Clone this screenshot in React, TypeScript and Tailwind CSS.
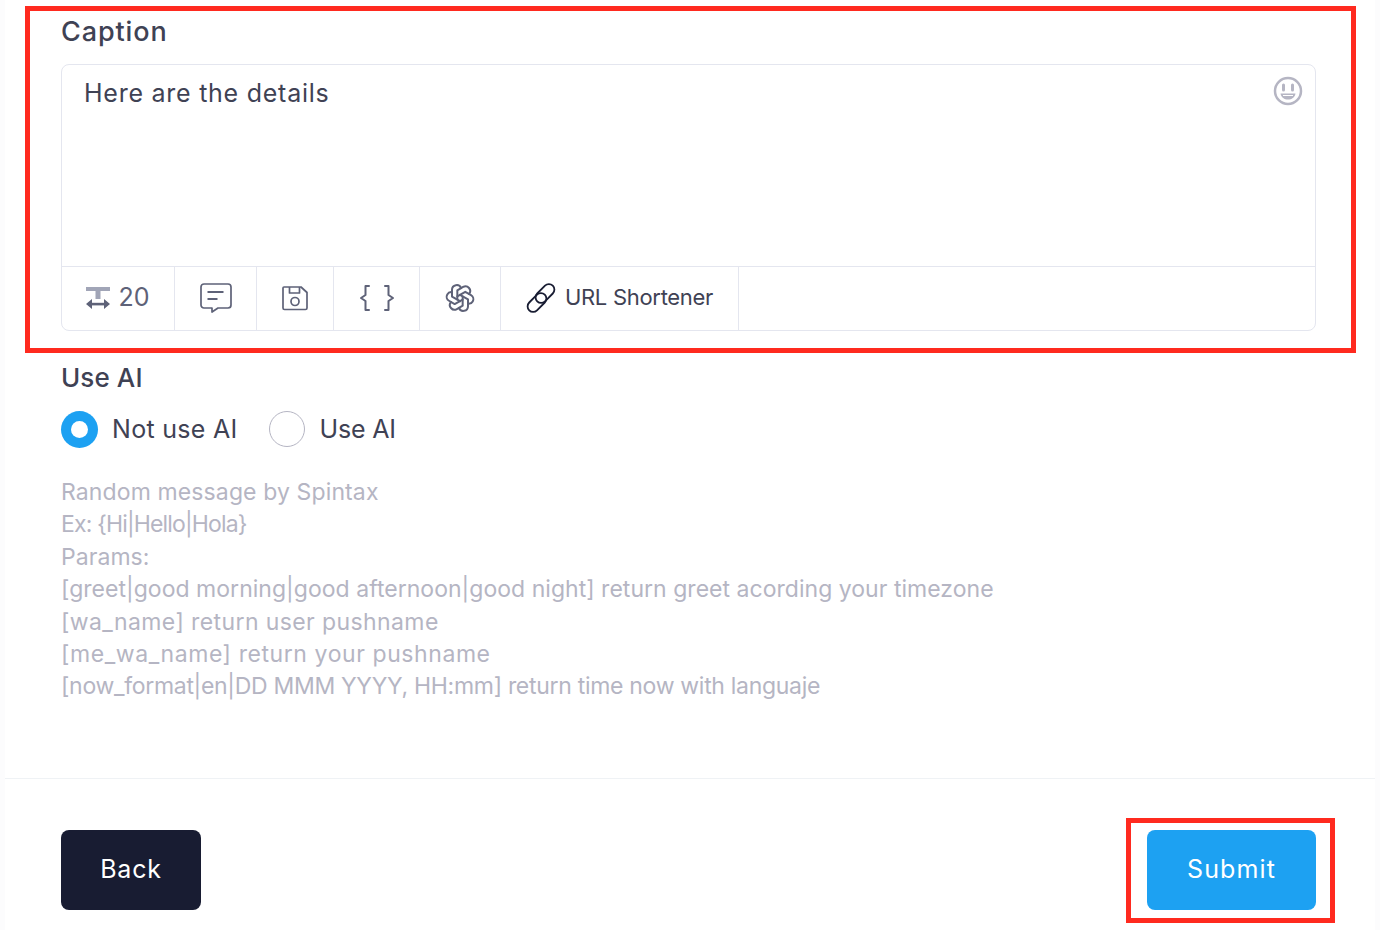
import { TbBrandOpenai } from "react-icons/tb";

const HELP_LINES = [
  { text: "Random message by Spintax", tracking: "tracking-[.12px]" },
  { text: "Ex: {Hi|Hello|Hola}", tracking: "tracking-[-.85px]" },
  { text: "Params:", tracking: "tracking-[.05px]" },
  { text: "[greet|good morning|good afternoon|good night] return greet acording your timezone", tracking: "tracking-[.03px]" },
  { text: "[wa_name] return user pushname", tracking: "tracking-[.4px]" },
  { text: "[me_wa_name] return your pushname", tracking: "tracking-[.58px]" },
  { text: "[now_format|en|DD MMM YYYY, HH:mm] return time now with languaje", tracking: "tracking-[-.3px]" },
];

function TextCountIcon() {
  return (
    <svg viewBox="0 0 24 24" width={24} height={24} aria-hidden="true">
      <rect x="0" y="1" width="24" height="4" fill="#a1a5b7" />
      <rect x="9.500" y="5" width="5" height="8" fill="#a1a5b7" />
      <rect x="4" y="16.800" width="16" height="2.600" fill="#5e6278" />
      <path d="M6 13L0 18l6 5zM18 13l6 5-6 5z" fill="#5e6278" />
    </svg>
  );
}

function MessageIcon() {
  return (
    <svg viewBox="0 0 32 30" width={32} height={30} aria-hidden="true" fill="none" stroke="#5e6278" strokeWidth="1.700" strokeLinejoin="round">
      <path d="M4 1h24a3 3 0 0 1 3 3v18a3 3 0 0 1-3 3H18l-6 4v-4H4a3 3 0 0 1-3-3V4a3 3 0 0 1 3-3z" />
      <path d="M7.500 9h16M7.500 16h10" strokeWidth="2" />
    </svg>
  );
}

function LinkIcon() {
  return (
    <svg viewBox="0 0 30 32" width={30} height={32} aria-hidden="true" fill="none" stroke="#181c32" strokeWidth="1.800">
      <rect x="8" y="6" width="22" height="11" rx="5.500" transform="rotate(-45 19 11.500)" />
      <rect x="0" y="15" width="22" height="11" rx="5.500" transform="rotate(-45 11 20.500)" />
    </svg>
  );
}

function SaveIcon() {
  return (
    <svg viewBox="0 0 28 28" width={28} height={28} aria-hidden="true" fill="none" stroke="#5e6278" strokeWidth="1.700" strokeLinejoin="round">
      <path d="M3 3h17l6 5.500V24a1.500 1.500 0 0 1-1.500 1.500h-21A1.500 1.500 0 0 1 2 24V4a1 1 0 0 1 1-1z" />
      <path d="M8.500 3v6h10V3" />
      <circle cx="14" cy="17.500" r="4" />
    </svg>
  );
}

function BracesIcon() {
  return (
    <svg viewBox="0 0 36 28" width={36} height={28} aria-hidden="true" fill="none" stroke="#5e6278" strokeWidth="2" strokeLinecap="round" strokeLinejoin="round">
      <path d="M10 2H6.500v9L2 14l4.500 3v9H10" />
      <path d="M26 2h3.500v9L34 14l-4.500 3v9H26" />
    </svg>
  );
}

function SmileIcon() {
  return (
    <svg viewBox="0 0 30 30" width={30} height={30} aria-hidden="true" fill="none">
      <circle cx="15" cy="15" r="13" stroke="#b5b5c3" strokeWidth="2.500" />
      <path d="M10.500 9v5M19.500 9v5" stroke="#b5b5c3" strokeWidth="3" strokeLinecap="round" />
      <path d="M7.500 17.500h15c-.8 4-3.800 6-7.500 6s-6.700-2-7.500-6z" fill="#b5b5c3" />
      <path d="M10 19.500h10" stroke="#ffffff" strokeWidth="1" />
    </svg>
  );
}

function ToolCell({ className, children }: { className: string; children: React.ReactNode }) {
  return <div className={`flex h-full shrink-0 items-center justify-center border-r border-[#e4e6ef] pb-[2px] ${className}`}>{children}</div>;
}

export default function App() {
  return (
    <div className="relative h-[930px] w-[1380px] overflow-hidden bg-[#fcfcfd] px-[5px] font-['Inter','Liberation_Sans',sans-serif] text-[#3f4254]">
      <div className="flex h-full flex-col bg-white">
        <div className="h-[779px] border-b border-[#eff2f5] pl-[56px] pr-[59px]">
          <h3 className="pt-[16px] text-[27px] leading-[32px] font-medium tracking-[.9px]">Caption</h3>
          <div className="mt-[16px] flex h-[267px] flex-col rounded-[8px] border border-[#e4e6ef]">
            <div className="flex h-[201px] items-start justify-between pl-[22px] pr-[12px]">
              <p className="pt-[12px] text-[25px] leading-[32px] tracking-[.75px]">Here are the details</p>
              <div className="pt-[11px]">
                <SmileIcon />
              </div>
            </div>
            <div className="flex h-[64px] items-center border-t border-[#e4e6ef] text-[#5e6278]">
              <ToolCell className="w-[113px] gap-[8px]">
                <TextCountIcon />
                <span className="text-[25px] leading-none">20</span>
              </ToolCell>
              <ToolCell className="w-[82px]">
                <MessageIcon />
              </ToolCell>
              <ToolCell className="w-[77px]">
                <SaveIcon />
              </ToolCell>
              <ToolCell className="w-[86px]">
                <BracesIcon />
              </ToolCell>
              <ToolCell className="w-[81px]">
                <TbBrandOpenai size={32} strokeWidth={1.500} color="#5e6278" />
              </ToolCell>
              <ToolCell className="w-[238px] gap-[9px] text-[#3f4254]">
                <LinkIcon />
                <span className="pb-[2px] text-[22px] leading-none tracking-[-.3px]">URL Shortener</span>
              </ToolCell>
            </div>
          </div>
          <h3 className="mt-[31px] text-[26px] leading-[32px] font-medium tracking-[.1px]">Use AI</h3>
          <div className="mt-[17px] flex h-[36px] items-center">
            <span className="flex size-[37px] items-center justify-center rounded-full bg-[#1da1f2]">
              <span className="size-[17px] rounded-full bg-white" />
            </span>
            <span className="ml-[14px] text-[25px] leading-none tracking-[.3px]">Not use AI</span>
            <span className="ml-[31px] size-[36px] rounded-full border border-[#b5b5c3] bg-white" />
            <span className="ml-[15px] text-[25px] leading-none tracking-[-.2px]">Use AI</span>
          </div>
          <div className="mt-[29px] text-[23px] leading-[32.400px] text-[#b5b5c3]">
            {HELP_LINES.map((line) => (
              <div key={line.text} className={line.tracking}>
                {line.text}
              </div>
            ))}
          </div>
        </div>
        <div className="flex items-start justify-between pl-[56px] pr-[59px] pt-[51px]">
          <button className="flex h-[80px] w-[140px] items-center justify-center rounded-[8px] bg-[#181c32] text-[25px] tracking-[.8px] text-white">Back</button>
          <button className="flex h-[80px] w-[169px] items-center justify-center rounded-[8px] bg-[#1da1f2] text-[25px] tracking-[1.100px] text-white">Submit</button>
        </div>
      </div>
      {/* red annotation boxes drawn over the screenshot */}
      <div className="absolute left-[25px] top-[6px] h-[347px] w-[1331px] border-[5px] border-[#ff2a1f]" />
      <div className="absolute left-[1126px] top-[818px] h-[105px] w-[209px] border-[5px] border-[#ff2a1f]" />
    </div>
  );
}
